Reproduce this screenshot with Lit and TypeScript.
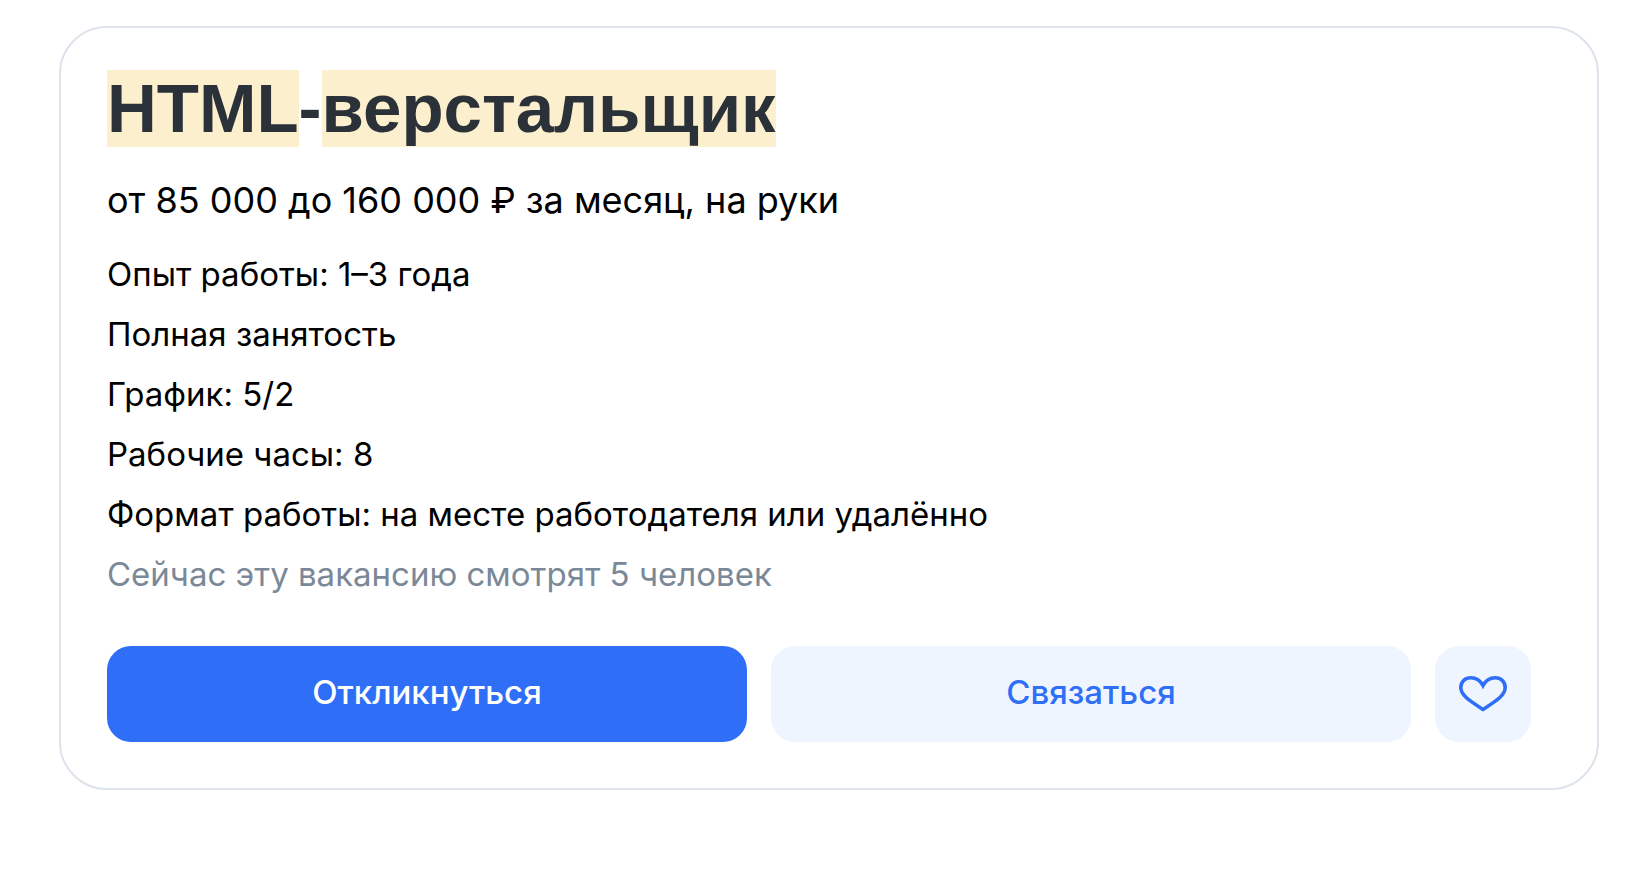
import { LitElement, html, css } from "lit";
import { customElement, property, state } from "lit/decorators.js";

@customElement("vacancy-card")
class VacancyCard extends LitElement {
  @property({ attribute: false }) details: string[] = [];
  @state() private saved = false;

  static styles = css`
    :host { display: block; }
    * { box-sizing: border-box; }
    .card {
      padding: 42px 66px 46px 46px;
      border: 2px solid #dce3eb;
      border-radius: 48px;
      background: #fff;
      color: #000;
    }
    .title {
      margin: 0;
      font: 700 69px/78px "Liberation Sans", Arial, sans-serif;
      color: #2b3139;
    }
    .mark { background: #fcefcd; color: inherit; }
    .salary {
      margin: 30px 0 0;
      font-size: 36px;
      line-height: 44px;
    }
    .details {
      display: flex;
      flex-direction: column;
      gap: 16px;
      margin: 30px 0 0;
      padding: 0;
      list-style: none;
      font-size: 33px;
      line-height: 44px;
    }
    .viewers {
      margin: 16px 0 0;
      font-size: 33px;
      line-height: 44px;
      color: #7b8897;
    }
    .actions {
      display: flex;
      gap: 24px;
      margin-top: 50px;
    }
    .button {
      flex: 1 1 0;
      min-width: 0;
      height: 96px;
      margin: 0;
      padding: 0 16px 4px;
      border: 0;
      border-radius: 24px;
      font: 500 33px/44px Inter, "Noto Sans", sans-serif;
      cursor: pointer;
    }
    .primary { background: #2f6ff7; color: #fff; }
    .secondary { background: #eef5fe; color: #2f6ff7; }
    .icon-button {
      flex: 0 0 96px;
      padding: 0;
      display: flex;
      align-items: center;
      justify-content: center;
    }
    .icon { display: block; width: 48px; height: 48px; }
  `;

  render() {
    return html`
      <article class="card">
        <h2 class="title"><mark class="mark">HTML</mark>-<mark class="mark">верстальщик</mark></h2>
        <p class="salary">от 85 000 до 160 000 ₽ за месяц, на руки</p>
        <ul class="details">
          ${this.details.map((d) => html`<li>${d}</li>`)}
        </ul>
        <p class="viewers">Сейчас эту вакансию смотрят 5 человек</p>
        <div class="actions">
          <button class="button primary" type="button">Откликнуться</button>
          <button class="button secondary" type="button">Связаться</button>
          <button
            class="button secondary icon-button"
            type="button"
            aria-label="В избранное"
            aria-pressed=${this.saved ? "true" : "false"}
            @click=${() => (this.saved = !this.saved)}
          >
            <svg class="icon" viewBox="0 0 48 48" fill=${this.saved ? "currentColor" : "none"} stroke="currentColor" stroke-width="3.6" aria-hidden="true">
              <path d="M24 15.500C21.500 10.700 17.500 7.700 11.800 7.700C6 7.700 1.800 11.800 1.800 17.500C1.800 25.500 11 31 24 39.400C37 31 46.200 25.500 46.200 17.500C46.200 11.800 42 7.700 36.200 7.700C30.500 7.700 26.500 10.700 24 15.500Z" />
            </svg>
          </button>
        </div>
      </article>
    `;
  }
}

@customElement("app-root")
class AppRoot extends LitElement {
  static styles = css`
    :host {
      display: block;
      box-sizing: border-box;
      min-height: 100vh;
      padding: 26px 49px 32px 59px;
      background: #fff;
      font-family: Inter, "Noto Sans", sans-serif;
    }
  `;

  private details = [
    "Опыт работы: 1–3 года",
    "Полная занятость",
    "График: 5/2",
    "Рабочие часы: 8",
    "Формат работы: на месте работодателя или удалённо",
  ];

  render() {
    return html`<vacancy-card .details=${this.details}></vacancy-card>`;
  }
}
